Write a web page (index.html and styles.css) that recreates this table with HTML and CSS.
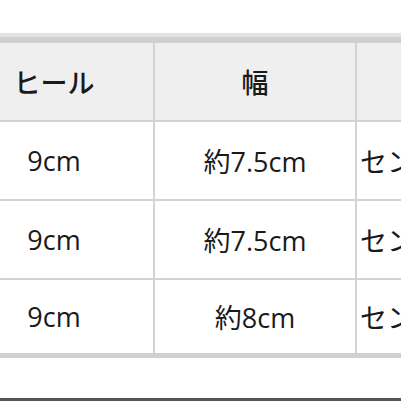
FILE: index.html
```html
<!DOCTYPE html>
<html lang="ja">
<head>
<meta charset="utf-8">
<link rel="stylesheet" href="styles.css">
</head>
<body>
<div class="page">
  <div class="top-band"></div>
  <div class="table">
    <div class="cell head">ヒール</div>
    <div class="cell head">幅</div>
    <div class="cell head"></div>
    <div class="cell">9cm</div>
    <div class="cell">約7.5cm</div>
    <div class="cell side">センター</div>
    <div class="cell">9cm</div>
    <div class="cell">約7.5cm</div>
    <div class="cell side">センター</div>
    <div class="cell short">9cm</div>
    <div class="cell short">約8cm</div>
    <div class="cell short side">センター</div>
  </div>
  <div class="spacer"></div>
  <div class="bottom-line"></div>
</div>
</body>
</html>
```
FILE: styles.css
```css
html, body {
  margin: 0;
  padding: 0;
  background: #ffffff;
  overflow: hidden;
}
.page {
  width: 401px;
  height: 401px;
  overflow: hidden;
  padding-top: 33px;
  box-sizing: border-box;
  font-family: "Open Sans", "Noto Sans CJK JP", sans-serif;
  color: #1a1a1a;
}
.top-band {
  height: 4px;
  background: #e2e2e2;
  width: 401px;
}
.table {
  display: grid;
  grid-template-columns: 198px 200px 200px;
  grid-template-rows: 77px 77px 77px 73px;
  gap: 2px;
  background: #d3d3d3;
  margin-left: -45px;
  width: 602px;
  border-top: 6px solid #d0d0d0;
  border-bottom: 5px solid #d0d0d0;
}
.cell {
  background: #ffffff;
  display: flex;
  align-items: center;
  justify-content: center;
  font-size: 27px;
  white-space: nowrap;
  overflow: hidden;
}
.head {
  background: #efefef;
  font-family: "Noto Sans CJK JP", sans-serif;
  font-size: 27px;
  font-weight: 500;
}
.side {
  justify-content: flex-start;
  padding-left: 3px;
}
.spacer {
  height: 40px;
}
.bottom-line {
  height: 3px;
  background: #555555;
}
```
